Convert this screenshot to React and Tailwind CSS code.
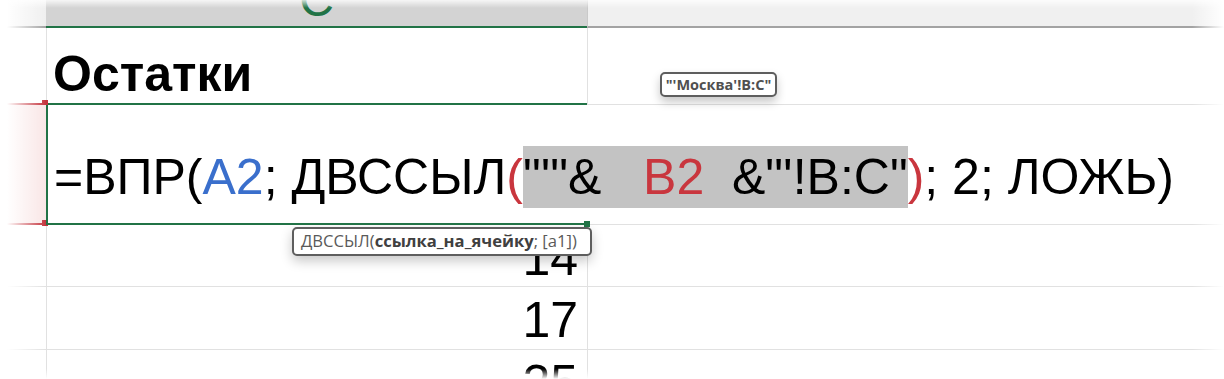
import React from 'react';

const GREEN = 'border-[#217346]';

const NumberRow = ({ value, height }) => (
  <div className={`flex ${height} overflow-hidden`}>
    <div className="w-[46px] shrink-0 border-b border-[#e1e1e1]" />
    <div className="w-[541px] shrink-0 border-l border-b border-[#e1e1e1] pr-[9px] pt-[8px] text-right text-[50px] leading-none">
      {value}
    </div>
    <div className="flex-1 border-l border-b border-[#e1e1e1]" />
  </div>
);

const App = () => {
  return (
    <div className="relative w-[1224px] h-[379px] overflow-hidden bg-white font-['Liberation_Sans',Arial,sans-serif] text-black">
      {/* column headers */}
      <div className="flex h-[28px]">
        <div className="w-[46px] shrink-0 bg-[#efefef] border-b-2 border-[#a3a3a3]" />
        <div className={`w-[541px] shrink-0 bg-[#d3d3d3] border-b-2 ${GREEN} flex justify-center overflow-hidden`}>
          <span className="-mt-[24px] text-[48px] leading-none text-[#217346]">C</span>
        </div>
        <div className="flex-1 bg-[#f0f0f0] border-l border-[#c9c9c9] border-b-2 border-b-[#a3a3a3]" />
      </div>

      {/* row 1 */}
      <div className="flex h-[77px]">
        <div className="relative w-[46px] shrink-0 border-b-2 border-[#c4343d]">
          <span className="absolute right-[-2px] bottom-[-3px] w-[6px] h-[6px] bg-[#c4343d]" />
        </div>
        <div className={`w-[541px] shrink-0 border-l border-l-[#e1e1e1] border-b-2 ${GREEN} pl-[6px] pt-[21px]`}>
          <span className="text-[50px] leading-none font-bold">Остатки</span>
        </div>
        <div className="flex-1 border-l border-[#e1e1e1] border-b border-b-[#e1e1e1]" />
      </div>

      {/* row 2: formula being edited */}
      <div className="flex h-[120px]">
        <div className="relative w-[46px] shrink-0 bg-[#f9e6e6] border-b-2 border-[#c4343d]">
          <span className="absolute right-[-2px] bottom-[-3px] w-[6px] h-[6px] bg-[#c4343d]" />
        </div>
        <div className={`relative z-10 w-[541px] shrink-0 border-l-2 border-b-2 ${GREEN} pl-[6px] pt-[41px]`}>
          <div className="whitespace-pre text-[50px] leading-[62px]">
            =ВПР(<span className="text-[#3a6fcc]">A2</span>; ДВССЫЛ<span className="text-[#c9363e]">(</span>
            <span className="inline-block bg-[#c3c3c3]">
              "'"&amp;   <span className="text-[#c9363e]">B2</span>  &amp;"'!B:C"
            </span>
            <span className="text-[#c9363e]">)</span>; 2; ЛОЖЬ)
          </div>
          <span className="absolute right-[-3px] bottom-[-4px] w-[6px] h-[6px] bg-[#217346]" />
        </div>
        <div className="flex-1 border-b border-[#e1e1e1]" />
      </div>

      <NumberRow value="14" height="h-[62px]" />
      <NumberRow value="17" height="h-[63px]" />
      <NumberRow value="25" height="h-[40px]" />

      {/* tooltips */}
      <div className="absolute left-[660px] top-[72px] h-[25px] w-[117px] rounded-[5px] border-2 border-[#5e5e5e] bg-white shadow-[0_5px_10px_rgba(0,0,0,0.22)] flex items-center justify-center whitespace-nowrap font-['Open_Sans',sans-serif] text-[14.5px] font-bold text-[#505050]">
        "'Москва'!B:C"
      </div>
      <div className="absolute left-[292px] top-[227px] h-[29px] w-[300px] rounded-[5px] border-2 border-[#5e5e5e] bg-white shadow-[0_5px_12px_rgba(0,0,0,0.22)] flex items-center pl-[7px] whitespace-nowrap font-['Open_Sans',sans-serif] text-[16.6px] text-[#5a5a5a]">
        ДВССЫЛ(<span className="font-bold text-[#404040]">ссылка_на_ячейку</span>; [a1])
      </div>

      {/* feathered edges */}
      <div className="pointer-events-none absolute inset-y-0 left-0 w-[46px] bg-linear-to-r from-white from-15% to-transparent" />
      <div className="pointer-events-none absolute inset-x-0 top-0 h-[8px] bg-linear-to-b from-white/80 to-transparent" />
      <div className="pointer-events-none absolute inset-y-0 right-0 w-[32px] bg-linear-to-l from-white to-transparent" />
      <div className="pointer-events-none absolute inset-x-0 bottom-0 h-[10px] bg-linear-to-t from-white to-transparent" />
    </div>
  );
};

export default App;
